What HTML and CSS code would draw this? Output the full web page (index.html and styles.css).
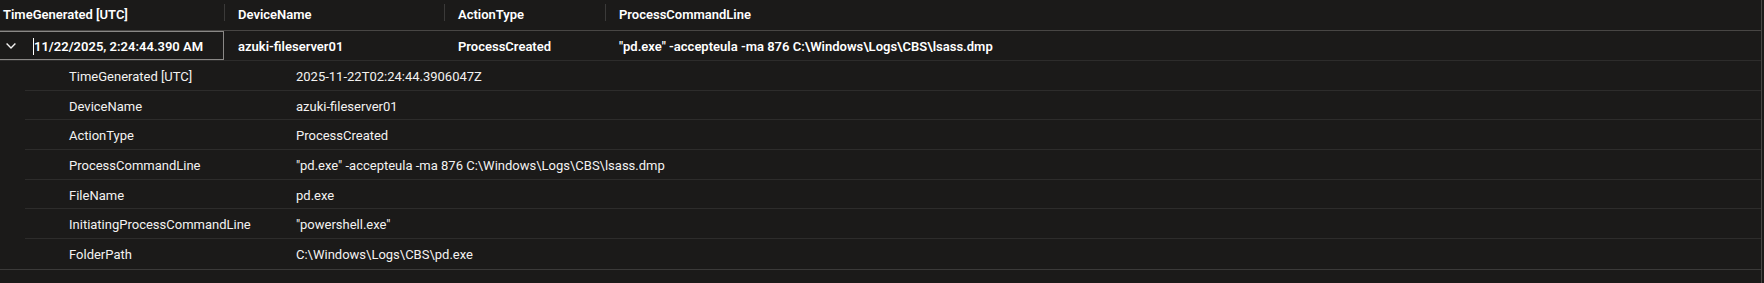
FILE: index.html
```html
<!DOCTYPE html>
<html lang="en">
<head>
  <meta charset="UTF-8">
  <title>Query results</title>
  <link rel="stylesheet" href="styles.css">
</head>
<body>
  <div class="results">
    <div class="head">
      <div class="th c1">TimeGenerated [UTC]</div>
      <div class="th c2">DeviceName</div>
      <div class="th c3">ActionType</div>
      <div class="th c4">ProcessCommandLine</div>
    </div>
    <div class="row">
      <div class="td c1 selected">
        <span class="chev">
          <svg width="10" height="6" viewBox="0 0 10 6"><path d="M0.6 0.6 L5 5 L9.4 0.6" fill="none" stroke="#f3f2f1" stroke-width="1.4"/></svg>
        </span>
        <span class="caret"></span>11/22/2025, 2:24:44.390 AM
      </div>
      <div class="td c2">azuki-fileserver01</div>
      <div class="td c3">ProcessCreated</div>
      <div class="td c4">"pd.exe" -accepteula -ma 876 C:\Windows\Logs\CBS\lsass.dmp</div>
    </div>
    <div class="detail">
      <div class="drow"><span class="key">TimeGenerated [UTC]</span><span class="val">2025-11-22T02:24:44.3906047Z</span></div>
      <div class="drow"><span class="key">DeviceName</span><span class="val">azuki-fileserver01</span></div>
      <div class="drow"><span class="key">ActionType</span><span class="val">ProcessCreated</span></div>
      <div class="drow"><span class="key">ProcessCommandLine</span><span class="val">"pd.exe" -accepteula -ma 876 C:\Windows\Logs\CBS\lsass.dmp</span></div>
      <div class="drow"><span class="key">FileName</span><span class="val">pd.exe</span></div>
      <div class="drow"><span class="key">InitiatingProcessCommandLine</span><span class="val">"powershell.exe"</span></div>
      <div class="drow"><span class="key">FolderPath</span><span class="val">C:\Windows\Logs\CBS\pd.exe</span></div>
    </div>
  </div>
</body>
</html>
```

FILE: styles.css
```css
* { box-sizing: border-box; }

html, body {
  margin: 0;
  background: #1b1a19;
  overflow: hidden;
}

body {
  font-family: Roboto, "Liberation Sans", sans-serif;
  font-size: 13px;
  color: #f3f2f1;
}

.results {
  width: 1762px;
  height: 283px;
  border-right: 1px solid #484644;
}

/* header + the expanded row */

.head,
.row {
  display: flex;
  height: 30px;
}

.head {
  height: 31px;
  border-bottom: 1px solid #484644;
}

.row {
  border-bottom: 1px solid #2d2c2b;
}

.th,
.td {
  display: flex;
  align-items: center;
  font-weight: 600;
  color: #ffffff;
  white-space: nowrap;
}

.th {
  position: relative;
  padding-bottom: 2px;
}

.td { padding-top: 2px; }

.th + .th::before {
  content: "";
  position: absolute;
  left: 0;
  top: 4px;
  height: 17px;
  border-left: 1px solid #3b3a39;
}

.c1 { width: 224px; }
.c2 { width: 220px; }
.c3 { width: 161px; }
.c4 { flex: 1; }

.th.c1 { padding-left: 3px; }
.th.c2, .th.c3, .th.c4,
.td.c2, .td.c3, .td.c4 { padding-left: 14px; }

.td.selected {
  border: 1px solid #8a8886;
  border-left: none;
  padding-top: 1px;
  padding-left: 6px;
}

.chev {
  display: flex;
  width: 27px;
  margin-top: -1px;
}

.caret {
  width: 1px;
  height: 17px;
  background: #ffffff;
}

/* expanded record */

.detail {
  border-bottom: 1px solid #3b3a39;
}

.drow {
  display: flex;
  align-items: center;
  height: 29.7px;
  margin-left: 25px;
  padding-top: 2px;
  padding-left: 44px;
  border-bottom: 1px solid #2d2c2b;
}

.drow:last-child { border-bottom: none; }

.key { width: 227px; }
```
